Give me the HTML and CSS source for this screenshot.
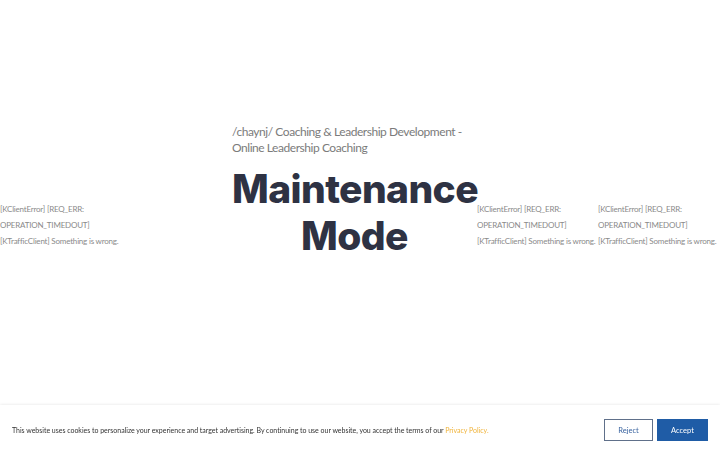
FILE: index.html
```html
<!DOCTYPE html>
<html lang="en">
<head>
<meta charset="utf-8">
<title>Maintenance Mode</title>
<link rel="stylesheet" href="styles.css">
</head>
<body>
<div class="page">
  <div class="err err-left">
    <p>[KClientError] [REQ_ERR:<br>OPERATION_TIMEDOUT]</p>
    <p>[KTrafficClient] Something is wrong.</p>
  </div>
  <main class="main">
    <p class="subtitle">/chaynj/ Coaching &amp; Leadership Development - Online Leadership Coaching</p>
    <h1 class="title">Maintenance Mode</h1>
  </main>
  <div class="err">
    <p>[KClientError] [REQ_ERR:<br>OPERATION_TIMEDOUT]</p>
    <p>[KTrafficClient] Something is wrong.</p>
  </div>
  <div class="err">
    <p>[KClientError] [REQ_ERR:<br>OPERATION_TIMEDOUT]</p>
    <p>[KTrafficClient] Something is wrong.</p>
  </div>
</div>
<div class="cookie">
  <p class="cookie-text">This website uses cookies to personalize your experience and target advertising. By continuing to use our website, you accept the terms of our <a class="cookie-link" href="#">Privacy Policy.</a></p>
  <div class="cookie-actions">
    <button class="btn btn-reject" type="button">Reject</button>
    <button class="btn btn-accept" type="button">Accept</button>
  </div>
</div>
</body>
</html>
```
FILE: styles.css
```css
html, body {
  margin: 0;
  padding: 0;
  background: #ffffff;
}
body {
  font-family: "Lato", "Liberation Sans", sans-serif;
  width: 720px;
  height: 450px;
  overflow: hidden;
}
.page {
  display: flex;
  align-items: flex-start;
}
.err {
  width: 121px;
  flex: none;
  margin-top: 201px;
  font-size: 8px;
  letter-spacing: -0.2px;
  line-height: 16px;
  color: #8a8a8a;
  white-space: nowrap;
}
.err-left {
  width: 232px;
}
.err p {
  margin: 0;
}
.main {
  width: 245px;
  flex: none;
  padding-top: 124px;
}
.subtitle {
  margin: 0;
  font-size: 12px;
  letter-spacing: -0.45px;
  line-height: 16px;
  color: #7b7b7b;
}
.title {
  margin: 9px 0 0;
  font-family: "Inter", "DejaVu Sans", sans-serif;
  font-weight: 800;
  font-size: 39px;
  letter-spacing: -0.6px;
  line-height: 47px;
  text-align: center;
  color: #2e3243;
}
.cookie {
  position: fixed;
  left: 0;
  right: 0;
  bottom: 0;
  height: 40px;
  background: #ffffff;
  box-shadow: 0 0 3px rgba(0, 0, 0, 0.12);
  display: flex;
  align-items: center;
  justify-content: space-between;
  padding: 5px 12px 0;
}
.cookie-text {
  margin: 0;
  font-size: 7px;
  letter-spacing: -0.02px;
  color: #333333;
}
.cookie-link {
  color: #f0b43c;
  text-decoration: none;
}
.cookie-actions {
  display: flex;
  gap: 4px;
}
.btn {
  font-family: "Lato", "Liberation Sans", sans-serif;
  font-size: 7.5px;
  height: 22px;
  padding: 0;
  cursor: pointer;
}
.btn-reject {
  width: 49px;
  background: #ffffff;
  border: 1px solid #60708a;
  color: #3a64a0;
}
.btn-accept {
  width: 51px;
  background: #1f5ca6;
  border: 1px solid #1f5ca6;
  color: #ffffff;
}
```
